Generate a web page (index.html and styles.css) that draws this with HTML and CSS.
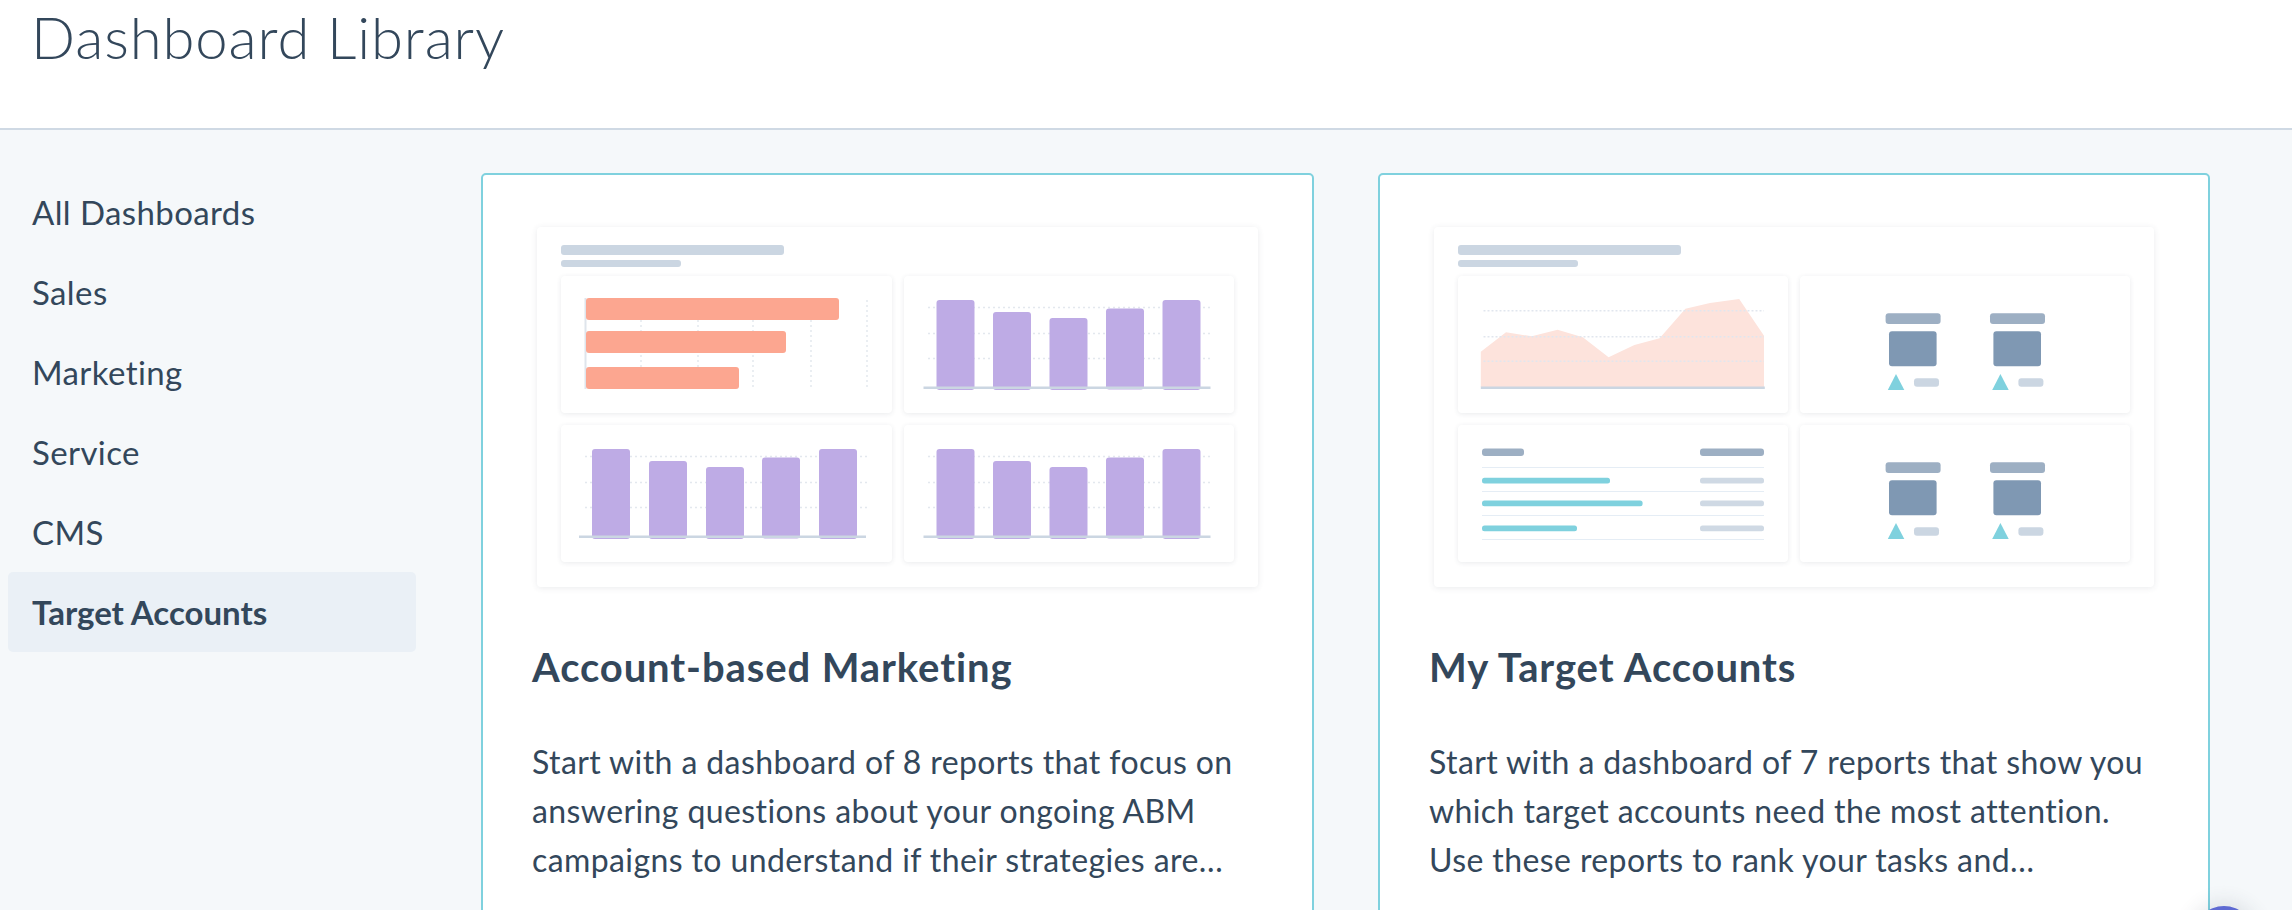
FILE: index.html
```html
<!DOCTYPE html>
<html lang="en">
<head>
<meta charset="utf-8">
<title>Dashboard Library</title>
<link rel="stylesheet" href="styles.css">
</head>
<body>
<header class="page-header">
  <h1 class="page-title">Dashboard Library</h1>
</header>
<div class="layout">
  <nav class="sidebar">
    <ul class="nav-list">
      <li class="nav-item">All Dashboards</li>
      <li class="nav-item">Sales</li>
      <li class="nav-item">Marketing</li>
      <li class="nav-item">Service</li>
      <li class="nav-item">CMS</li>
      <li class="nav-item nav-item-active">Target Accounts</li>
    </ul>
  </nav>
  <main class="cards">
    <article class="card">
      <div class="preview">
        <div class="preview-bar preview-bar-lg"></div>
        <div class="preview-bar preview-bar-sm"></div>
        <div class="preview-grid">
          <div class="panel">
            <svg class="panel-svg" viewBox="0 0 330 137">
              <g stroke="#e3e8ee" stroke-width="1.5" stroke-dasharray="2 3">
                <line x1="80" y1="24" x2="80" y2="113"/>
                <line x1="137" y1="24" x2="137" y2="113"/>
                <line x1="192" y1="24" x2="192" y2="113"/>
                <line x1="250" y1="24" x2="250" y2="113"/>
                <line x1="306" y1="24" x2="306" y2="113"/>
              </g>
              <rect x="23.5" y="22" width="2" height="91" fill="#dfe5ec"/>
              <g fill="#fca690">
                <rect x="25" y="22" width="253" height="22" rx="3"/>
                <rect x="25" y="55" width="200" height="22" rx="3"/>
                <rect x="25" y="91" width="153" height="22" rx="3"/>
              </g>
            </svg>
          </div>
          <div class="panel">
            <svg class="panel-svg" viewBox="0 0 330 137">
              <g stroke="#e3e8ee" stroke-width="1.5" stroke-dasharray="2 3">
                <line x1="24" y1="31.5" x2="306" y2="31.5"/>
                <line x1="24" y1="57.5" x2="306" y2="57.5"/>
                <line x1="24" y1="82.5" x2="306" y2="82.5"/>
              </g>
              <g fill="#beabe5">
                <rect x="32.5" y="24" width="38" height="90" rx="3"/>
                <rect x="89" y="36" width="38" height="78" rx="3"/>
                <rect x="145.5" y="42" width="38" height="72" rx="3"/>
                <rect x="202" y="32.5" width="38" height="81" rx="3"/>
                <rect x="258.5" y="24" width="38" height="90" rx="3"/>
              </g>
              <rect x="19.5" y="110.5" width="287" height="2.5" fill="#cbd6e2"/>
            </svg>
          </div>
          <div class="panel">
            <svg class="panel-svg" viewBox="0 0 330 137">
              <g stroke="#e3e8ee" stroke-width="1.5" stroke-dasharray="2 3">
                <line x1="24" y1="31.5" x2="306" y2="31.5"/>
                <line x1="24" y1="57.5" x2="306" y2="57.5"/>
                <line x1="24" y1="82.5" x2="306" y2="82.5"/>
              </g>
              <g fill="#beabe5">
                <rect x="31" y="24" width="38" height="90" rx="3"/>
                <rect x="88" y="36" width="38" height="78" rx="3"/>
                <rect x="145" y="42" width="38" height="72" rx="3"/>
                <rect x="201" y="32.5" width="38" height="81" rx="3"/>
                <rect x="258" y="24" width="38" height="90" rx="3"/>
              </g>
              <rect x="18" y="110.5" width="287" height="2.5" fill="#cbd6e2"/>
            </svg>
          </div>
          <div class="panel">
            <svg class="panel-svg" viewBox="0 0 330 137">
              <g stroke="#e3e8ee" stroke-width="1.5" stroke-dasharray="2 3">
                <line x1="24" y1="31.5" x2="306" y2="31.5"/>
                <line x1="24" y1="57.5" x2="306" y2="57.5"/>
                <line x1="24" y1="82.5" x2="306" y2="82.5"/>
              </g>
              <g fill="#beabe5">
                <rect x="32.5" y="24" width="38" height="90" rx="3"/>
                <rect x="89" y="36" width="38" height="78" rx="3"/>
                <rect x="145.5" y="42" width="38" height="72" rx="3"/>
                <rect x="202" y="32.5" width="38" height="81" rx="3"/>
                <rect x="258.5" y="24" width="38" height="90" rx="3"/>
              </g>
              <rect x="19.5" y="110.5" width="287" height="2.5" fill="#cbd6e2"/>
            </svg>
          </div>
        </div>
      </div>
      <h2 class="card-title">Account-based Marketing</h2>
      <p class="card-text">
        <span class="card-line">Start with a dashboard of 8 reports that focus on</span>
        <span class="card-line">answering questions about your ongoing ABM</span>
        <span class="card-line">campaigns to understand if their strategies are…</span>
      </p>
    </article>

    <article class="card">
      <div class="preview">
        <div class="preview-bar preview-bar-lg"></div>
        <div class="preview-bar preview-bar-sm"></div>
        <div class="preview-grid">
          <div class="panel">
            <svg class="panel-svg" viewBox="0 0 330 137">
              <polygon fill="#fde3dc" points="22.8,75.7 48,56.3 73.8,60.3 99.6,53.7 124.8,61.3 150.6,81.3 176.4,69 201.6,62.3 227.4,32.7 252,27 281.2,23 306,59.7 306,111 22.8,111"/>
              <g stroke="#e1e6ee" stroke-width="1.5" stroke-dasharray="2 2">
                <line x1="25.5" y1="34.7" x2="306" y2="34.7"/>
                <line x1="25.5" y1="60.7" x2="306" y2="60.7"/>
                <line x1="25.5" y1="85.3" x2="306" y2="85.3"/>
              </g>
              <rect x="22.8" y="110.5" width="284" height="2.5" fill="#cbd6e2"/>
            </svg>
          </div>
          <div class="panel">
            <svg class="panel-svg" viewBox="0 0 330 137">
              <g>
                <rect x="85.6" y="37.3" width="55" height="10.7" rx="3" fill="#9dafc3"/>
                <rect x="89" y="55.3" width="47.6" height="35" rx="3" fill="#7f98b3"/>
                <polygon points="87.8,114 96,98 104.3,114" fill="#7fd1de"/>
                <rect x="114" y="102.3" width="25" height="8.4" rx="3" fill="#cbd6e2"/>
              </g>
              <g transform="translate(104.4 0)">
                <rect x="85.6" y="37.3" width="55" height="10.7" rx="3" fill="#9dafc3"/>
                <rect x="89" y="55.3" width="47.6" height="35" rx="3" fill="#7f98b3"/>
                <polygon points="87.8,114 96,98 104.3,114" fill="#7fd1de"/>
                <rect x="114" y="102.3" width="25" height="8.4" rx="3" fill="#cbd6e2"/>
              </g>
            </svg>
          </div>
          <div class="panel">
            <svg class="panel-svg" viewBox="0 0 330 137">
              <rect x="24" y="23.5" width="42" height="7.5" rx="3" fill="#9dafc3"/>
              <rect x="242" y="23.5" width="64" height="7.5" rx="3" fill="#9dafc3"/>
              <g stroke="#e5edf5" stroke-width="1">
                <line x1="24" y1="42.5" x2="306" y2="42.5"/>
                <line x1="24" y1="66.5" x2="306" y2="66.5"/>
                <line x1="24" y1="90.5" x2="306" y2="90.5"/>
                <line x1="24" y1="114.5" x2="306" y2="114.5"/>
              </g>
              <g fill="#7fd1de">
                <rect x="24" y="52.8" width="128" height="5.8" rx="2.5"/>
                <rect x="24" y="75.5" width="160.6" height="5.8" rx="2.5"/>
                <rect x="24" y="100.5" width="95" height="5.8" rx="2.5"/>
              </g>
              <g fill="#cfd9e4">
                <rect x="242" y="52.8" width="64" height="5.8" rx="2.5"/>
                <rect x="242" y="75.5" width="64" height="5.8" rx="2.5"/>
                <rect x="242" y="100.5" width="64" height="5.8" rx="2.5"/>
              </g>
            </svg>
          </div>
          <div class="panel">
            <svg class="panel-svg" viewBox="0 0 330 137">
              <g>
                <rect x="85.6" y="37.3" width="55" height="10.7" rx="3" fill="#9dafc3"/>
                <rect x="89" y="55.3" width="47.6" height="35" rx="3" fill="#7f98b3"/>
                <polygon points="87.8,114 96,98 104.3,114" fill="#7fd1de"/>
                <rect x="114" y="102.3" width="25" height="8.4" rx="3" fill="#cbd6e2"/>
              </g>
              <g transform="translate(104.4 0)">
                <rect x="85.6" y="37.3" width="55" height="10.7" rx="3" fill="#9dafc3"/>
                <rect x="89" y="55.3" width="47.6" height="35" rx="3" fill="#7f98b3"/>
                <polygon points="87.8,114 96,98 104.3,114" fill="#7fd1de"/>
                <rect x="114" y="102.3" width="25" height="8.4" rx="3" fill="#cbd6e2"/>
              </g>
            </svg>
          </div>
        </div>
      </div>
      <h2 class="card-title">My Target Accounts</h2>
      <p class="card-text">
        <span class="card-line">Start with a dashboard of 7 reports that show you</span>
        <span class="card-line">which target accounts need the most attention.</span>
        <span class="card-line">Use these reports to rank your tasks and…</span>
      </p>
    </article>
  </main>
</div>
<div class="chat-launcher" aria-hidden="true"></div>
</body>
</html>
```

FILE: styles.css
```css
html, body {
  margin: 0;
  padding: 0;
  height: 910px;
  overflow: hidden;
}

body {
  background: #f5f8fa;
  color: #33475b;
  font-family: Lato, "Open Sans", sans-serif;
  position: relative;
}

.page-header {
  height: 128px;
  background: #ffffff;
  border-bottom: 2px solid #cfd9e4;
  padding-left: 31px;
  box-sizing: content-box;
}

.page-title {
  margin: 0;
  padding-top: 3px;
  font-size: 58px;
  font-weight: 300;
  line-height: 68px;
  letter-spacing: 0.9px;
  color: #33475b;
}

.layout {
  display: flex;
  align-items: flex-start;
}

.sidebar {
  width: 481px;
  flex: none;
}

.nav-list {
  list-style: none;
  margin: 0;
  padding: 42px 0 0 8px;
}

.nav-item {
  width: 408px;
  height: 80px;
  box-sizing: border-box;
  padding-left: 24px;
  display: flex;
  align-items: center;
  font-size: 33px;
  font-weight: 400;
  letter-spacing: 0.4px;
  color: #33475b;
  border-radius: 5px;
}

.nav-item-active {
  background: #eaf0f6;
  font-weight: 700;
  letter-spacing: 0;
}

.cards {
  display: flex;
  gap: 64px;
  padding-top: 43px;
}

.card {
  width: 833px;
  height: 900px;
  box-sizing: border-box;
  background: #ffffff;
  border: 2px solid #7fd1de;
  border-radius: 5px;
  padding: 52px 49px 0 49px;
}

.card + .card {
  width: 832px;
}

.preview {
  margin: 0 5px;
  height: 360px;
  box-sizing: border-box;
  background: #ffffff;
  border-radius: 4px;
  box-shadow: 0 1px 6px rgba(45, 62, 80, 0.10);
  padding: 18px 24px 25px 24px;
}

.preview-bar {
  background: #cbd6e2;
  border-radius: 3px;
}

.preview-bar-lg {
  width: 223px;
  height: 10px;
  margin-bottom: 5px;
}

.preview-bar-sm {
  width: 120px;
  height: 7px;
  margin-bottom: 9px;
}

.preview-grid {
  display: grid;
  grid-template-columns: 1fr 1fr;
  grid-auto-rows: 137px;
  gap: 12px;
}

.panel {
  background: #ffffff;
  border-radius: 4px;
  box-shadow: 0 1px 5px rgba(45, 62, 80, 0.10);
  overflow: hidden;
}

.panel-svg {
  display: block;
  width: 330px;
  height: 137px;
}

.card-title {
  margin: 57px 0 0 0;
  font-size: 40px;
  line-height: 46px;
  font-weight: 700;
  letter-spacing: 0.9px;
  color: #33475b;
}

.card-text {
  margin: 47px 0 0 0;
  font-size: 32px;
  line-height: 49px;
  font-weight: 400;
  letter-spacing: 0.4px;
  color: #33475b;
}

.card-line {
  display: block;
  white-space: nowrap;
}

.chat-launcher {
  position: absolute;
  left: 2194px;
  top: 906px;
  width: 60px;
  height: 60px;
  border-radius: 50%;
  background: #5e6ad2;
  box-shadow: 0 0 18px 6px rgba(45, 62, 80, 0.10);
}
```
